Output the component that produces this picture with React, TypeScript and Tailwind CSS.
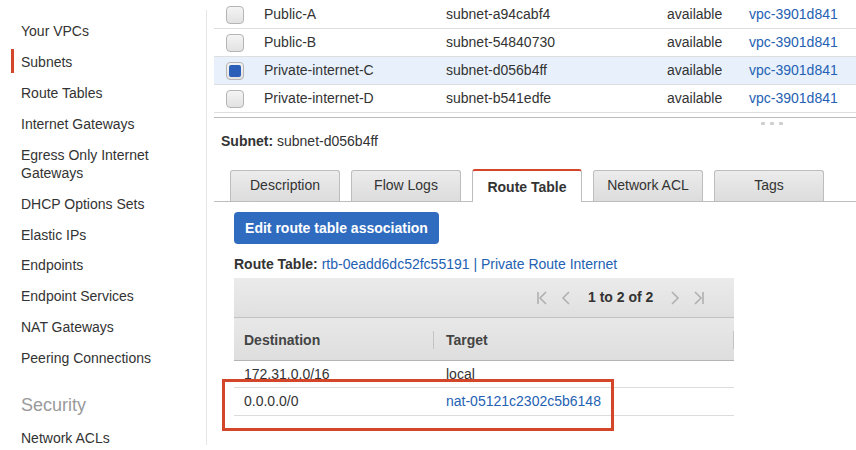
import React from "react";

const sideItems = [
  "Your VPCs",
  "Subnets",
  "Route Tables",
  "Internet Gateways",
  "Egress Only Internet Gateways",
  "DHCP Options Sets",
  "Elastic IPs",
  "Endpoints",
  "Endpoint Services",
  "NAT Gateways",
  "Peering Connections",
];

const subnets = [
  { name: "Public-A", id: "subnet-a94cabf4", sel: false },
  { name: "Public-B", id: "subnet-54840730", sel: false },
  { name: "Private-internet-C", id: "subnet-d056b4ff", sel: true },
  { name: "Private-internet-D", id: "subnet-b541edfe", sel: false },
];

const tabs = ["Description", "Flow Logs", "Route Table", "Network ACL", "Tags"];

function Checkbox({ checked }: { checked: boolean }) {
  return (
    <div className="w-[18px] h-[18px] rounded-[4px] border border-[#b5b5b5] bg-gradient-to-b from-[#f4f4f4] to-[#e2e2e2] p-[2px]">
      {checked && <div className="w-full h-full rounded-[2px] bg-[#2c60b8]" />}
    </div>
  );
}

function Sidebar() {
  return (
    <aside className="w-[207px] shrink-0 pt-[10px] pb-[5px]">
      <div className="h-full border-r border-[#e6e6e6] pt-[5px] text-[14px] text-[#333]">
        {sideItems.map((item, i) => (
          <div
            key={item}
            className={
              "relative flex items-center pl-[21px] pr-4 leading-[18px] " +
              (item.startsWith("Egress") ? "h-[49px]" : i > 6 ? "h-[30.75px]" : "h-[31px]")
            }
          >
            {item === "Subnets" && <span className="absolute left-[11px] top-[3px] w-[3px] h-[24px] bg-[#d4462a]" />}
            <span className={item.startsWith("Egress") ? "w-[140px]" : ""}>{item}</span>
          </div>
        ))}
        <div className="h-[50px] pt-[21px] pl-[21px] text-[18px] leading-[22px] text-[#9a9a9a]">Security</div>
        <div className="h-[31px] flex items-center pl-[21px]">Network ACLs</div>
      </div>
    </aside>
  );
}

function SubnetTable() {
  return (
    <div className="ml-[7px]">
      {subnets.map((s, i) => (
        <div
          key={s.id}
          className={
            "flex items-center border-b border-[#dedede] text-[14px] text-[#333] " +
            (i === 0 ? "h-[29px] pt-[1px] " : "h-[28px] ") +
            (s.sel ? "bg-[#e8f1fb]" : "")
          }
        >
          <div className="w-[50px] pl-[12px]">
            <Checkbox checked={s.sel} />
          </div>
          <div className="w-[182px]">{s.name}</div>
          <div className="w-[221px]">{s.id}</div>
          <div className="w-[82px]">available</div>
          <div className="text-[#2461b3]">vpc-3901d841</div>
        </div>
      ))}
      <div className="mt-[4px] border-t border-[#bdbdbd] h-[12px] flex items-center gap-[5px] pl-[547px]">
        <span className="w-[4px] h-[3px] rounded-[1px] bg-[#cfcfcf]" />
        <span className="w-[4px] h-[3px] rounded-[1px] bg-[#cfcfcf]" />
        <span className="w-[4px] h-[3px] rounded-[1px] bg-[#cfcfcf]" />
      </div>
    </div>
  );
}

function PagerIcon({ kind }: { kind: "first" | "prev" | "next" | "last" }) {
  return (
    <svg width="12" height="14" viewBox="0 0 12 14" fill="none" stroke="#b0b0b0" strokeWidth="1.6">
      {kind === "first" && (
        <>
          <path d="M2 1v12" />
          <path d="M10 1L4 7l6 6" />
        </>
      )}
      {kind === "prev" && <path d="M8 1L2 7l6 6" />}
      {kind === "next" && <path d="M4 1l6 6-6 6" />}
      {kind === "last" && (
        <>
          <path d="M2 1l6 6-6 6" />
          <path d="M10 1v12" />
        </>
      )}
    </svg>
  );
}

function RouteGrid() {
  return (
    <div className="ml-[27px] w-[500px] mt-[5px]">
      <div className="h-[40px] flex items-center bg-gradient-to-b from-[#ebebeb] to-[#e0e0e0] border-b border-[#c2c2c2] pl-[302px] gap-[13px]">
        <PagerIcon kind="first" />
        <PagerIcon kind="prev" />
        <span className="text-[14px] font-bold text-[#333] mx-[2px]">1 to 2 of 2</span>
        <PagerIcon kind="next" />
        <PagerIcon kind="last" />
      </div>
      <div className="h-[43px] flex items-center bg-gradient-to-b from-[#e8e8e8] to-[#dedede] border-b border-[#b4b4b4] text-[14px] font-bold text-[#444] pt-[2px]">
        <div className="w-[200px] pl-[10px] border-r border-[#c4c4c4] h-[18px] leading-[18px]">Destination</div>
        <div className="flex-1 pl-[12px] border-r border-[#c4c4c4] h-[18px] leading-[18px]">Target</div>
      </div>
      <div className="h-[27px] flex items-center border-b border-[#dcdcdc] text-[14px] text-[#333]">
        <div className="w-[200px] pl-[10px]">172.31.0.0/16</div>
        <div className="pl-[12px]">local</div>
      </div>
      <div className="h-[28px] flex items-center border-b border-[#dcdcdc] text-[14px] text-[#333]">
        <div className="w-[200px] pl-[10px]">0.0.0.0/0</div>
        <div className="pl-[12px] text-[#2461b3]">nat-05121c2302c5b6148</div>
      </div>
    </div>
  );
}

export default function App() {
  return (
    <div className="relative w-[856px] h-[450px] overflow-hidden bg-white flex font-['Liberation_Sans',Arial,sans-serif]">
      <Sidebar />
      <main className="flex-1 flex flex-col">
        <SubnetTable />
        <div className="ml-[14px] mt-[3px] text-[14px] leading-[18px] text-[#333]">
          <span className="font-bold">Subnet:</span> subnet-d056b4ff
        </div>
        <div className="ml-[7px] mt-[20px] flex items-end gap-[11px] pl-[16px] border-b border-[#bdbdbd] h-[32px]">
          {tabs.map((t) => {
            const active = t === "Route Table";
            return (
              <div
                key={t}
                className={
                  "w-[110px] flex items-center justify-center text-[14px] text-[#333] rounded-t-[3px] border border-b-0 " +
                  (active
                    ? "h-[33px] -mb-[1px] bg-white border-[#bdbdbd] border-t-2 border-t-[#d4462a] font-bold pt-[1px]"
                    : "h-[31px] bg-gradient-to-b from-[#ececec] to-[#dcdcdc] border-[#bdbdbd] pb-[2px]")
                }
              >
                {t}
              </div>
            );
          })}
        </div>
        <div className="ml-[27px] mt-[10px]">
          <button className="w-[205px] h-[32px] rounded-[4px] bg-[#2f6cbf] text-white text-[14px] font-bold">
            Edit route table association
          </button>
        </div>
        <div className="ml-[27px] mt-[11px] text-[14px] text-[#333] leading-[18px]">
          <span className="font-bold">Route Table:</span>{" "}
          <span className="text-[#2461b3]">rtb-0eadd6dc52fc55191 | Private Route Internet</span>
        </div>
        <RouteGrid />
      </main>
      <div className="absolute left-[222px] top-[379px] w-[392px] h-[52px] border-[3px] border-[#d4462a]" />
    </div>
  );
}
